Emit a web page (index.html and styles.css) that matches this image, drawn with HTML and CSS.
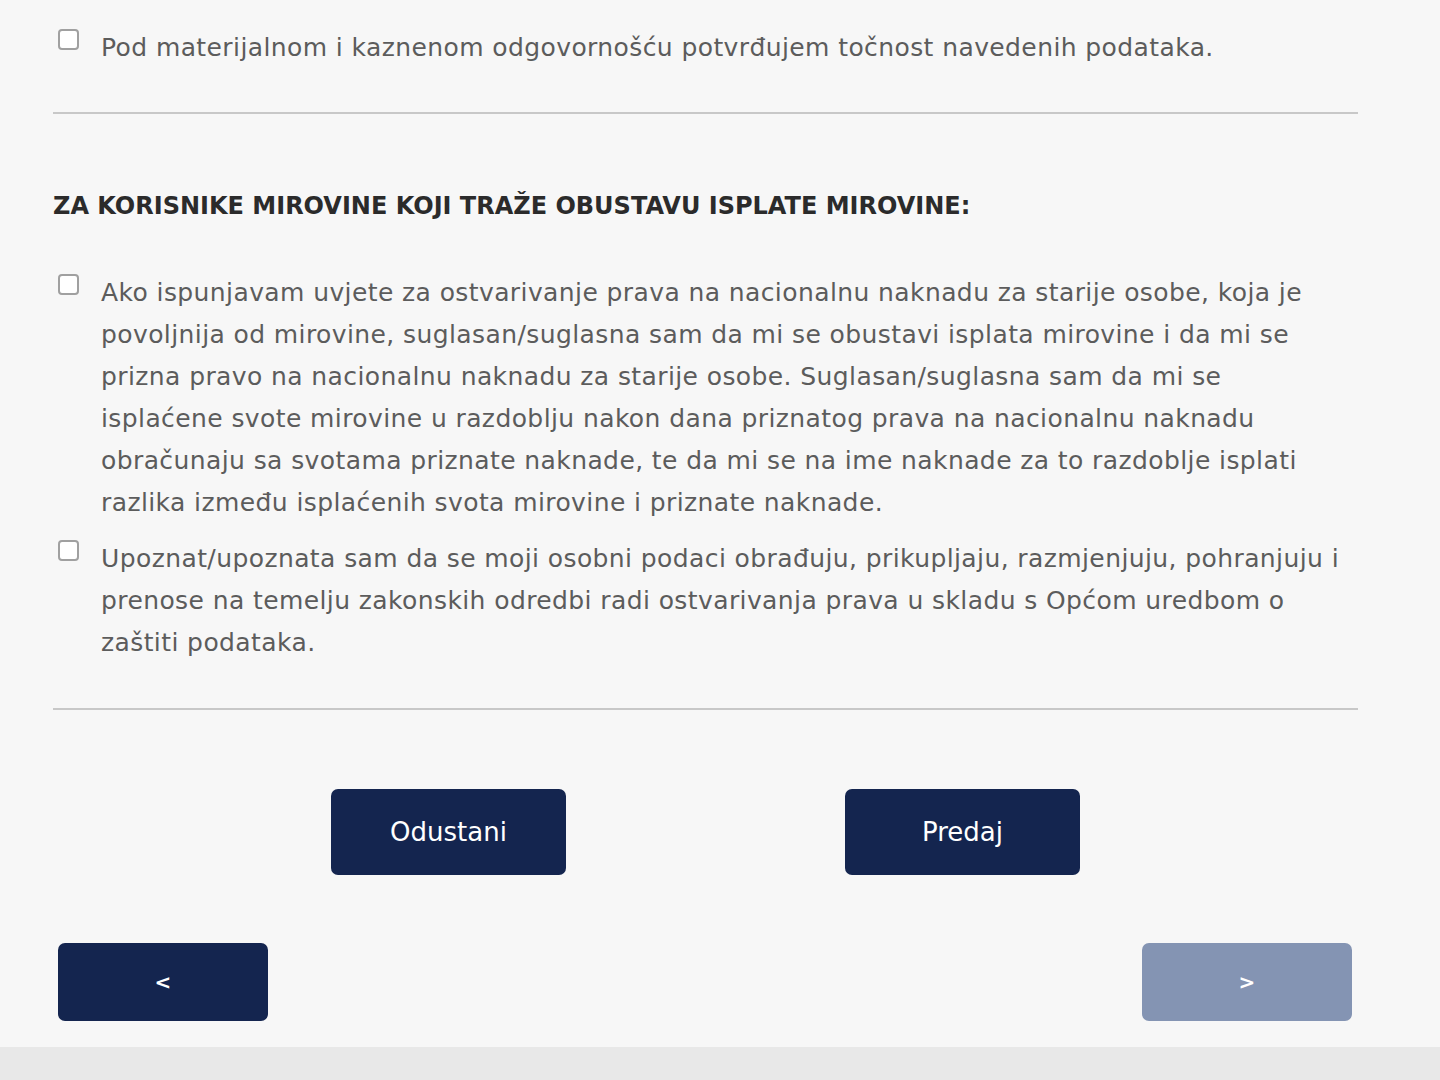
FILE: index.html
```html
<!DOCTYPE html>
<html lang="hr">
<head>
<meta charset="utf-8">
<title>Obrazac</title>
<link rel="stylesheet" href="styles.css">
</head>
<body>
<main class="page">
  <section class="form">
    <label class="check-row first">
      <input type="checkbox" class="check">
      <span class="check-text">Pod materijalnom i kaznenom odgovornošću potvrđujem točnost navedenih podataka.</span>
    </label>
    <hr class="divider">
    <h2 class="section-title">ZA KORISNIKE MIROVINE KOJI TRAŽE OBUSTAVU ISPLATE MIROVINE:</h2>
    <div class="check-list">
      <label class="check-row">
        <input type="checkbox" class="check">
        <span class="check-text">Ako ispunjavam uvjete za ostvarivanje prava na nacionalnu naknadu za starije osobe, koja je povoljnija od mirovine, suglasan/suglasna sam da mi se obustavi isplata mirovine i da mi se prizna pravo na nacionalnu naknadu za starije osobe. Suglasan/suglasna sam da mi se isplaćene svote mirovine u razdoblju nakon dana priznatog prava na nacionalnu naknadu obračunaju sa svotama priznate naknade, te da mi se na ime naknade za to razdoblje isplati razlika između isplaćenih svota mirovine i priznate naknade.</span>
      </label>
      <label class="check-row">
        <input type="checkbox" class="check">
        <span class="check-text">Upoznat/upoznata sam da se moji osobni podaci obrađuju, prikupljaju, razmjenjuju, pohranjuju i prenose na temelju zakonskih odredbi radi ostvarivanja prava u skladu s Općom uredbom o zaštiti podataka.</span>
      </label>
    </div>
    <hr class="divider">
    <div class="actions">
      <button class="btn btn-main" type="button">Odustani</button>
      <button class="btn btn-main" type="button">Predaj</button>
    </div>
    <div class="nav">
      <button class="btn btn-nav" type="button">&lt;</button>
      <button class="btn btn-nav disabled" type="button">&gt;</button>
    </div>
  </section>
</main>
<footer class="footer"></footer>
</body>
</html>
```
FILE: styles.css
```css
html, body {
  margin: 0;
  padding: 0;
  background: #f7f7f7;
}
body {
  font-family: "DejaVu Sans", Verdana, sans-serif;
  color: #555;
  min-height: 1080px;
  display: flex;
  flex-direction: column;
}
.page {
  flex: 1;
}
.form {
  width: 1305px;
  margin-left: 53px;
  padding-top: 27px;
}
.check-row {
  display: flex;
  align-items: flex-start;
}
.check {
  appearance: none;
  -webkit-appearance: none;
  width: 21px;
  height: 21px;
  margin: 2px 22px 0 5px;
  border: 2px solid #a0a0a0;
  border-radius: 4px;
  background: #fff;
  flex: none;
  box-sizing: border-box;
}
.check-text {
  font-size: 25px;
  line-height: 42px;
  letter-spacing: 0.4px;
  color: #5c5c5c;
  flex: 1;
  padding-right: 12px;
}
.divider {
  border: 0;
  border-top: 2px solid #c8c8c8;
  margin: 43px 0 0;
  height: 0;
}
.section-title {
  margin: 76px 0 0;
  font-size: 24px;
  line-height: 32px;
  font-weight: bold;
  letter-spacing: 0;
  color: #2b2b2b;
}
.check-list {
  margin-top: 50px;
  display: flex;
  flex-direction: column;
  gap: 14px;
}
.check-list + .divider {
  margin-top: 44px;
}
.actions {
  display: flex;
  justify-content: center;
  gap: 279px;
  margin-top: 79px;
}
.btn {
  border: 0;
  color: #fff;
  font-family: "DejaVu Sans", Verdana, sans-serif;
  cursor: pointer;
}
.btn-main {
  width: 235px;
  height: 86px;
  background: #14254f;
  border-radius: 7px;
  font-size: 26px;
  letter-spacing: 0;
}
.nav {
  display: flex;
  justify-content: space-between;
  padding: 0 6px 0 5px;
  margin-top: 68px;
}
.btn-nav {
  width: 210px;
  height: 78px;
  background: #14254f;
  border-radius: 7px;
  font-size: 20px;
  font-weight: bold;
}
.btn-nav.disabled {
  background: #8494b3;
}
.footer {
  height: 34px;
  background: #e8e8e8;
  margin-top: 26px;
}
```
